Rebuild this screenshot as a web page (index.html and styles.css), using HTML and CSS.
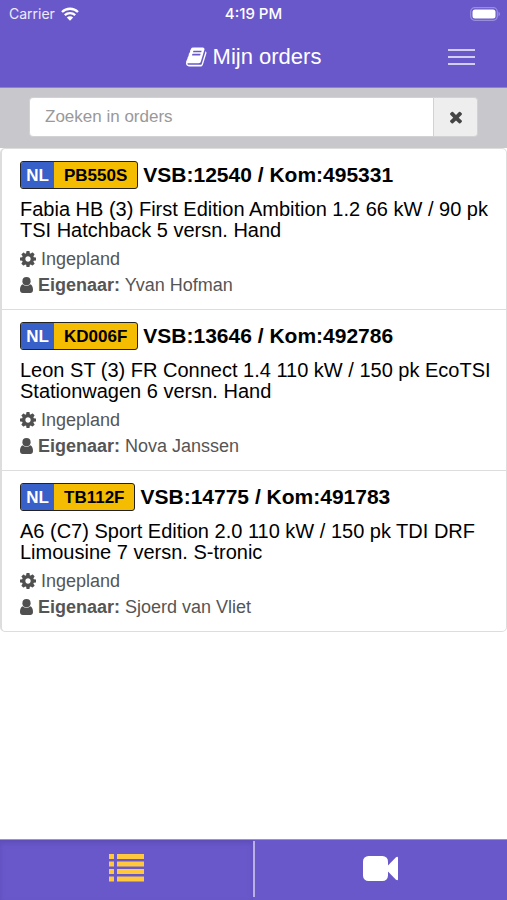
FILE: index.html
```html
<!DOCTYPE html>
<html lang="nl">
<head>
<meta charset="utf-8">
<meta name="viewport" content="width=device-width, initial-scale=1">
<title>Mijn orders</title>
<link rel="stylesheet" href="styles.css">
</head>
<body>
<svg class="symbols" aria-hidden="true">
  <symbol id="cog" viewBox="128 128 1536 1536"><path d="M1152 896q0-106-75-181t-181-75-181 75-75 181 75 181 181 75 181-75 75-181zm512-109v222q0 12-8 23t-20 13l-185 28q-19 54-39 91 35 50 107 138 10 12 10 25t-9 23q-27 37-99 108t-94 71q-12 0-26-9l-138-108q-44 23-91 38-16 136-29 186-7 28-36 28h-222q-14 0-24.500-8.500t-11.500-21.500l-28-184q-49-16-90-37l-141 107q-10 9-25 9-14 0-25-11-126-114-165-168-7-10-7-23 0-12 8-23 15-21 51-66.500t54-70.500q-27-50-41-99l-183-27q-13-2-21-12.500t-8-23.500v-222q0-12 8-23t19-13l186-28q14-46 39-92-40-57-107-138-10-12-10-24 0-10 9-23 26-36 98.500-107.500t94.500-71.500q13 0 26 10l138 107q44-23 91-38 16-136 29-186 7-28 36-28h222q14 0 24.500 8.500t11.500 21.500l28 184q49 16 90 37l142-107q9-9 24-9 13 0 25 10 129 119 165 170 7 8 7 22 0 12-8 23-15 21-51 66.500t-54 70.500q26 50 41 98l183 28q13 2 21 12.500t8 23.500z"/></symbol>
  <symbol id="user" viewBox="0 0 13 16"><circle cx="6.500" cy="4.200" r="4.100"/><path d="M2.800 7.200C.7 8 0 10.200 0 13c0 1.800 1.100 3 2.700 3h7.600c1.600 0 2.700-1.200 2.700-3 0-2.800-.7-5-2.800-5.800a5 5 0 0 1-7.400 0z"/></symbol>
</svg>
<header class="top">
  <div class="status">
    <span class="carrier">Carrier
      <svg width="18" height="14" viewBox="0 0 18 14" fill="none" stroke="#fff" stroke-width="2.300" aria-hidden="true"><path d="M1 5a11.500 11.500 0 0 1 16 0M3.800 8.200a7.500 7.500 0 0 1 10.400 0"/><path fill="#fff" stroke="none" d="M5.800 10.500a4.600 4.600 0 0 1 6.400 0L9 13.800z"/></svg>
    </span>
    <span class="clock">4:19 PM</span>
    <svg class="battery" width="31" height="14" viewBox="0 0 31 14" aria-hidden="true"><rect x=".7" y=".7" width="26.600" height="12.600" rx="4" fill="none" stroke="#9a8ddd" stroke-width="1.200"/><rect x="2.500" y="2.500" width="23" height="9" rx="2.500" fill="#fff"/><path d="M28.500 4.500q3 2.500 0 5z" fill="#9a8ddd"/></svg>
  </div>
  <div class="bar">
    <h1>
      <svg width="22" height="22" viewBox="0 0 1792 1792" fill="#fff" aria-hidden="true"><path d="M1639 478q40 57 18 129l-275 906q-19 64-76.500 107.500t-122.500 43.500h-923q-77 0-148.500-53.500t-99.500-131.500q-24-67-2-127 0-4 3-27t4-37q1-8-3-21.500t-3-19.500q2-11 8-21t16.500-23.500 16.500-23.500q23-38 45-91.500t30-91.500q3-10 .5-30t-.5-28q3-11 17-28t17-23q21-36 42-92t25-90q1-9-2.500-32t.5-28q4-13 22-30.500t22-22.500q19-26 42.500-84.500t27.500-96.500q1-8-3-25.500t-2-26.500q2-8 9-18t18-23 17-21q8-12 16.500-30.500t15-35 16-36 19.500-32 26.500-23.500 36-11.500 47.500 5.500l-1 3q38-9 51-9h761q74 0 114 56t18 130l-274 906q-36 119-71.500 153.500t-128.500 34.500h-869q-27 0-38 15-11 16-1 43 24 70 144 70h923q29 0 56-15.500t35-41.500l300-987q7-22 5-57 38 15 59 43zm-1064 2q-4 13 2 22.500t20 9.500h608q13 0 25.500-9.500t16.500-22.500l21-64q4-13-2-22.500t-20-9.500h-608q-13 0-25.500 9.500t-16.500 22.500zm-83 256q-4 13 2 22.500t20 9.500h608q13 0 25.500-9.500t16.500-22.500l21-64q4-13-2-22.500t-20-9.500h-608q-13 0-25.500 9.500t-16.500 22.500z"/></svg>
      Mijn orders
    </h1>
    <button class="menu" type="button" aria-label="Menu"><span></span><span></span><span></span></button>
  </div>
</header>
<form class="search">
  <input type="text" placeholder="Zoeken in orders" aria-label="Zoeken in orders">
  <button type="button" aria-label="Wissen"><svg width="18" height="18" viewBox="0 0 1792 1792" fill="#444" aria-hidden="true"><path d="M1490 1322q0 40-28 68l-136 136q-28 28-68 28t-68-28l-294-294-294 294q-28 28-68 28t-68-28l-136-136q-28-28-28-68t28-68l294-294-294-294q-28-28-28-68t28-68l136-136q28-28 68-28t68 28l294 294 294-294q28-28 68-28t68 28l136 136q28 28 28 68t-28 68l-294 294 294 294q28 28 28 68z"/></svg></button>
</form>
<main>
  <ul class="orders">
    <li>
      <h2><span class="plate"><span class="country">NL</span><span class="number">PB550S</span></span>VSB:12540 / Kom:495331</h2>
      <p class="car">Fabia HB (3) First Edition Ambition 1.2 66 kW / 90 pk TSI Hatchback 5 versn. Hand</p>
      <p class="meta"><svg class="cog" aria-hidden="true"><use href="#cog"/></svg>Ingepland</p>
      <p class="meta"><svg class="user" aria-hidden="true"><use href="#user"/></svg><span><b>Eigenaar:</b> Yvan Hofman</span></p>
    </li>
    <li>
      <h2><span class="plate"><span class="country">NL</span><span class="number">KD006F</span></span>VSB:13646 / Kom:492786</h2>
      <p class="car">Leon ST (3) FR Connect 1.4 110 kW / 150 pk EcoTSI Stationwagen 6 versn. Hand</p>
      <p class="meta"><svg class="cog" aria-hidden="true"><use href="#cog"/></svg>Ingepland</p>
      <p class="meta"><svg class="user" aria-hidden="true"><use href="#user"/></svg><span><b>Eigenaar:</b> Nova Janssen</span></p>
    </li>
    <li>
      <h2><span class="plate"><span class="country">NL</span><span class="number">TB112F</span></span>VSB:14775 / Kom:491783</h2>
      <p class="car">A6 (C7) Sport Edition 2.0 110 kW / 150 pk TDI DRF Limousine 7 versn. S-tronic</p>
      <p class="meta"><svg class="cog" aria-hidden="true"><use href="#cog"/></svg>Ingepland</p>
      <p class="meta"><svg class="user" aria-hidden="true"><use href="#user"/></svg><span><b>Eigenaar:</b> Sjoerd van Vliet</span></p>
    </li>
  </ul>
</main>
<nav class="tabs">
  <a class="active" href="#orders" aria-label="Orders"><svg width="35" height="28" viewBox="0 0 35 28" fill="#ffc83d" aria-hidden="true"><path d="M0 0h5v5H0zM8 0h27v5H8zM0 7.500h5v5H0zM8 7.500h27v5H8zM0 15h5v5H0zM8 15h27v5H8zM0 22.500h5v5H0zM8 22.500h27v5H8z"/></svg></a>
  <span class="divider"></span>
  <a href="#video" aria-label="Video"><svg width="35" height="25" viewBox="0 0 35 25" fill="#fff" aria-hidden="true"><rect width="25" height="25" rx="5.500"/><path d="M24 10.500L33 1.200q2-1.200 2 .8v21q0 2-2 .8L24 14.500z"/></svg></a>
</nav>
</body>
</html>
```
FILE: styles.css
```css
* {
  box-sizing: border-box;
}

body {
  margin: 0;
  min-height: 100vh;
  display: flex;
  flex-direction: column;
  background: #fff;
  color: #000;
  font-family: "Liberation Sans", Arial, sans-serif;
}

h1, h2, p, ul {
  margin: 0;
  padding: 0;
}

button {
  border: 0;
  padding: 0;
  cursor: pointer;
}

.symbols {
  position: absolute;
  width: 0;
  height: 0;
}

.top {
  background: #6958ca;
  color: #fff;
  border-bottom: 1px solid #8d83cd;
}

.status {
  display: grid;
  grid-template-columns: 1fr auto 1fr;
  align-items: center;
  height: 27px;
  padding: 0 6px;
  font: 14px/20px Inter, sans-serif;
}

.carrier {
  display: flex;
  align-items: center;
  gap: 6px;
  padding-left: 3px;
  color: #eeebfa;
}

.clock {
  font-size: 15px;
  font-weight: 500;
}

.battery {
  justify-self: end;
}

.bar {
  display: grid;
  grid-template-columns: 1fr auto 1fr;
  align-items: center;
  height: 60px;
  padding: 0 32px;
}

h1 {
  grid-column: 2;
  display: flex;
  align-items: center;
  gap: 5px;
  font-size: 22px;
  line-height: 28px;
  font-weight: 400;
}

.menu {
  justify-self: end;
  display: grid;
  gap: 5px;
  width: 27px;
  background: none;
}

.menu span {
  height: 2px;
  background: #d3cdf0;
}

.search {
  display: flex;
  padding: 9px 29px 11px;
  background: #c8c7cc;
}

.search input {
  flex: 1;
  min-width: 0;
  height: 40px;
  padding: 0 15px;
  border: 1px solid #d2d2d4;
  border-radius: 4px 0 0 4px;
  background: #fff;
  font: 17px/24px "Liberation Sans", Arial, sans-serif;
}

.search input::placeholder {
  color: #999;
}

.search button {
  display: grid;
  place-items: center;
  width: 44px;
  border: 1px solid #d2d2d4;
  border-left: 0;
  border-radius: 0 4px 4px 0;
  background: #eee;
}

main {
  flex: 1;
}

.orders {
  list-style: none;
  border: 1px solid #ddd;
  border-left-width: 2px;
  border-radius: 5px;
}

.orders li {
  padding: 12px 10px 11px 18px;
}

.orders li + li {
  border-top: 1px solid #ddd;
}

h2 {
  display: flex;
  align-items: center;
  gap: 5px;
  height: 28px;
  font-size: 21px;
  line-height: 28px;
}

.plate {
  display: flex;
  height: 28px;
  border: 1px solid #222;
  border-radius: 3px;
  overflow: hidden;
  background: #f5bd02;
  font-size: 17px;
  line-height: 28px;
}

.country {
  width: 33px;
  text-align: center;
  background: #3760c9;
  color: #fff;
}

.number {
  padding: 0 10px;
}

.car {
  margin: 10px 0 5px;
  font-size: 20px;
  line-height: 21px;
}

.meta {
  display: flex;
  align-items: center;
  gap: 5px;
  color: #555;
  font-size: 18px;
  line-height: 26px;
}

.meta svg {
  fill: #505050;
}

.cog {
  width: 16px;
  height: 16px;
}

.user {
  width: 13px;
  height: 16px;
}

.tabs {
  display: grid;
  grid-template-columns: 1fr 2px 1fr;
  height: 61px;
  border-top: 1px solid #9b90dc;
  background: #6958ca;
}

.tabs a {
  display: grid;
  place-items: center;
  padding-bottom: 4px;
}

.tabs .active {
  box-shadow: inset 0 3px 5px #5e4eb8;
}

.divider {
  margin: 1px 0 3px;
  background: #b9b0e8;
}
```
